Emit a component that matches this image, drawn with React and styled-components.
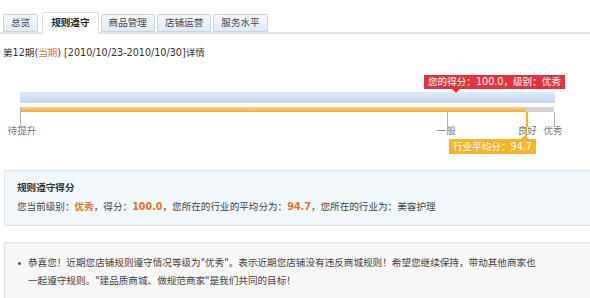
import React from "react";
import styled, { createGlobalStyle } from "styled-components";

const Global = createGlobalStyle`
  html, body { margin: 0; padding: 0; background: #fff; }
  body {
    font-family: "DejaVu Sans", "Noto Sans CJK SC", sans-serif;
    font-size: 9.6px;
    color: #333;
    overflow: hidden;
  }
`;

const Page = styled.div`
  width: 590px;
  height: 298px;
  overflow: hidden;
`;

const TabBar = styled.div`
  display: flex;
  align-items: flex-end;
  gap: 2px;
  margin-top: 12px;
  height: 20px;
  padding-left: 3px;
  border-bottom: 2px solid #dde6ec;
`;

const Tab = styled.div`
  box-sizing: border-box;
  height: ${(p) => (p.$active ? "22px" : "18px")};
  margin-bottom: ${(p) => (p.$active ? "-2px" : "0")};
  margin-left: ${(p) => (p.$active ? "2px" : "0")};
  padding: 0 ${(p) => (p.$active ? "8px" : "7px")};
  line-height: ${(p) => (p.$active ? "19px" : "16px")};
  border: 1px solid ${(p) => (p.$active ? "#d4dee8" : "#c6d6e6")};
  border-bottom: ${(p) => (p.$active ? "none" : "1px solid #c6d6e6")};
  border-radius: 2px 2px 0 0;
  background: ${(p) => (p.$active ? "#fff" : "linear-gradient(#f4f8fc, #dfeaf6)")};
  font-weight: ${(p) => (p.$active ? "bold" : "normal")};
  color: ${(p) => (p.$active ? "#222" : "#444")};
  white-space: nowrap;
`;

const Period = styled.div`
  margin: 12px 0 0 3px;
  line-height: 14px;
  color: #333;
`;

const Hot = styled.span`
  color: #e8731f;
  font-weight: ${(p) => (p.$bold ? "bold" : "normal")};
`;

/* ---------- score chart ---------- */

const Chart = styled.div`
  display: flex;
  flex-direction: column;
  padding: 15px 0 0 20px;
`;

const TipRow = styled.div`
  display: flex;
  padding-left: ${(p) => p.$indent}px;
`;

const Tip = styled.div`
  position: relative;
  height: ${(p) => p.$h}px;
  line-height: ${(p) => p.$h}px;
  padding: 0 4px;
  background: ${(p) => p.$color};
  color: #fff;
  white-space: nowrap;
  &::after {
    content: "";
    position: absolute;
    left: ${(p) => p.$arrow - 4}px;
    ${(p) => (p.$down ? "top: 100%;" : "bottom: 100%;")}
    border-left: 4px solid transparent;
    border-right: 4px solid transparent;
    ${(p) =>
      p.$down
        ? `border-top: 4px solid ${p.$color};`
        : `border-bottom: 4px solid ${p.$color};`}
  }
`;

const ScoreBar = styled.div`
  margin-top: 3px;
  width: 535px;
  height: 11px;
  background: linear-gradient(#dce9f7, #c4d9f0);
`;

const Track = styled.div`
  margin-top: 4px;
  width: 534px;
  height: 5px;
  background: #d2d2d2;
`;

const Fill = styled.div`
  height: 100%;
  background: linear-gradient(#f9d67e, #f0a83a);
`;

const Scale = styled.div`
  position: relative;
  width: 534px;
  height: 27px;
`;

const Tick = styled.div`
  position: absolute;
  top: ${(p) => (p.$long ? "-5px" : "0")};
  width: 1px;
  height: ${(p) => (p.$long ? "20px" : p.$avg ? "27px" : "15px")};
  background: ${(p) => (p.$avg ? "#f5b42c" : "#b4b4b4")};
`;

const Label = styled.div`
  position: absolute;
  top: 12px;
  line-height: 14px;
  transform: translateX(-50%);
  color: #777;
  white-space: nowrap;
`;

/* ---------- boxes ---------- */

const InfoBox = styled.div`
  margin: 16px -10px 0 4px;
  padding: 10px 12px 11px;
  background: #f2f7fc;
  border: 1px solid #dbe5ef;
`;

const BoxTitle = styled.div`
  font-weight: bold;
  line-height: 14px;
  color: #333;
  margin-bottom: 5px;
`;

const BoxLine = styled.div`
  line-height: 14px;
  color: #444;
`;

const NoteBox = styled.div`
  margin: 16px -10px 0 4px;
  padding: 11px 0 14px 12px;
  background: #f7f7f7;
  border: 1px solid #e0e0e0;
  border-bottom: none;
`;

const NoteList = styled.ul`
  margin: 0;
  padding: 0 0 0 11px;
  width: 511px;
  list-style: none;
`;

const NoteItem = styled.li`
  position: relative;
  line-height: 18px;
  color: #444;
  &::before {
    content: "";
    position: absolute;
    left: -10px;
    top: 8px;
    width: 3px;
    height: 3px;
    border-radius: 50%;
    background: #555;
  }
`;

const tabs = ["总览", "规则遵守", "商品管理", "店铺运营", "服务水平"];
const levels = [
  { name: "待提升", at: 0, long: true, shift: 2 },
  { name: "一般", at: 80, shift: -1 },
  { name: "良好", at: 95, shift: 0 },
  { name: "优秀", at: 100, shift: -1 },
];
const score = 100.0;
const average = 94.7;

export default function App() {
  return (
    <Page>
      <Global />
      <TabBar>
        {tabs.map((t, i) => (
          <Tab key={t} $active={i === 1}>
            {t}
          </Tab>
        ))}
      </TabBar>
      <Period>
        第12期(<Hot>当期</Hot>) [2010/10/23-2010/10/30]详情
      </Period>
      <Chart>
        <TipRow $indent={404}>
          <Tip $h={14} $color="#e5333c" $arrow={32} $down>
            您的得分：{score.toFixed(1)}，级别：优秀
          </Tip>
        </TipRow>
        <ScoreBar />
        <Track>
          <Fill style={{ width: `${average}%` }} />
        </Track>
        <Scale>
          {levels.map((l) => (
            <Tick key={l.name} $long={l.long} style={{ left: `${l.at}%` }} />
          ))}
          <Tick $avg style={{ left: `${average}%` }} />
          {levels.map((l) => (
            <Label key={l.name} style={{ left: `calc(${l.at}% + ${l.shift}px)` }}>
              {l.name}
            </Label>
          ))}
        </Scale>
        <TipRow $indent={429}>
          <Tip $h={15} $color="#f6b42a" $arrow={76}>
            行业平均分：{average}
          </Tip>
        </TipRow>
      </Chart>
      <InfoBox>
        <BoxTitle>规则遵守得分</BoxTitle>
        <BoxLine>
          您当前级别：<Hot $bold>优秀</Hot>，得分：<Hot $bold>{score.toFixed(1)}</Hot>，您所在的行业的平均分为：
          <Hot $bold>{average}</Hot>，您所在的行业为：美容护理
        </BoxLine>
      </InfoBox>
      <NoteBox>
        <NoteList>
          <NoteItem>
            恭喜您！近期您店铺规则遵守情况等级为"优秀"。表示近期您店铺没有违反商城规则！希望您继续保持，带动其他商家也一起遵守规则。"建品质商城、做规范商家"是我们共同的目标！
          </NoteItem>
        </NoteList>
      </NoteBox>
    </Page>
  );
}
